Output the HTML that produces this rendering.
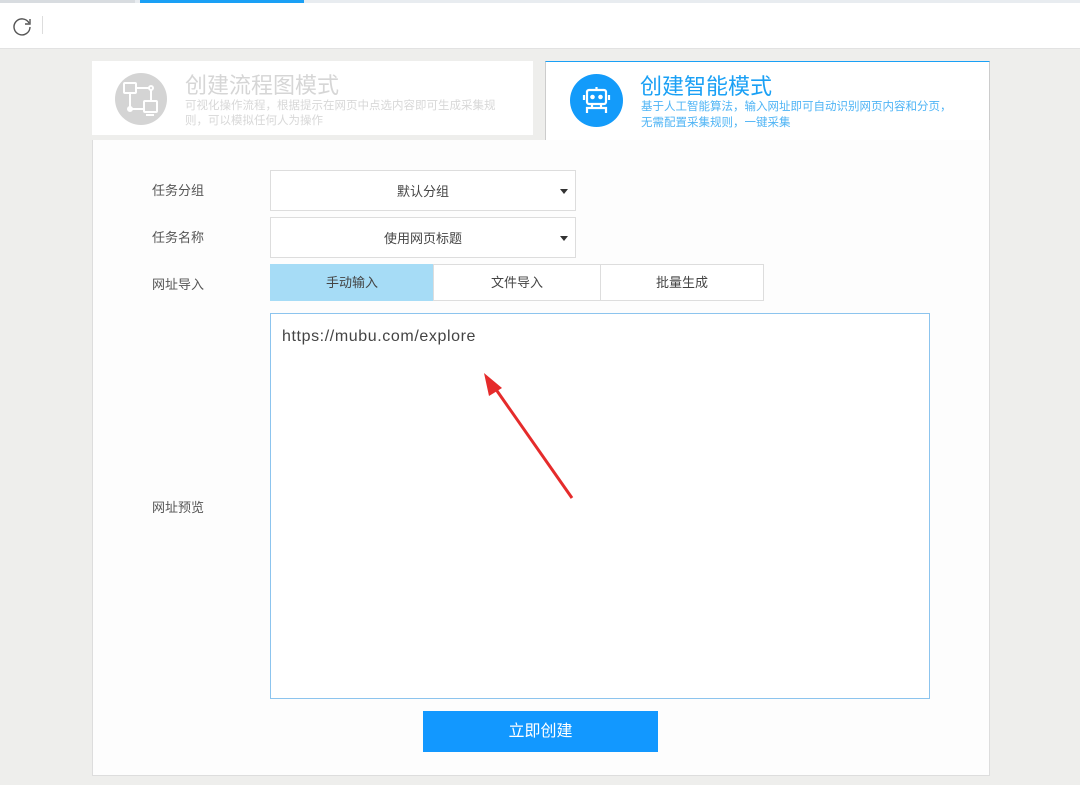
<!DOCTYPE html>
<html><head><meta charset="utf-8"><style>
*{margin:0;padding:0;box-sizing:border-box}
body{width:1080px;height:785px;background:#eeeeec;position:relative;overflow:hidden;font-family:"Liberation Sans","Noto Sans CJK SC",sans-serif}
.a{position:absolute}
.lab{position:absolute;left:152px;font-size:13px;color:#555}
.sel{position:absolute;left:270px;width:306px;height:41px;border:1px solid #ddd;background:#fff;font-size:13px;color:#444;text-align:center;line-height:41px}
.sel:after{content:"";position:absolute;right:7px;top:18px;border:4px solid transparent;border-top:5px solid #333}
.tb{position:absolute;top:264px;height:37px;border:1px solid #ddd;font-size:13px;color:#444;text-align:center;line-height:36px}
</style></head><body>
<div class="a" style="left:0;top:0;width:1080px;height:49px;background:#fff;border-bottom:1px solid #e2e2e2"></div>
<div class="a" style="left:0;top:0;width:1080px;height:3px;background:#e8ecf0"></div>
<div class="a" style="left:0;top:0;width:135px;height:3px;background:#d8dce0"></div>
<div class="a" style="left:140px;top:0;width:164px;height:3px;background:#1aa0f5"></div>
<svg class="a" style="left:11px;top:15px" width="22" height="22" viewBox="0 0 22 22"><path d="M18 8A8 8 0 1 0 19 12" fill="none" stroke="#555" stroke-width="1.4"/><path d="M19 4v5h-5" fill="none" stroke="#555" stroke-width="1.4"/></svg>
<div class="a" style="left:42px;top:16px;width:1px;height:18px;background:#ddd"></div>

<div class="a" style="left:92px;top:61px;width:441px;height:74px;background:#fff"></div>
<div class="a" style="left:115px;top:73px;width:52px;height:52px;border-radius:50%;background:#d4d4d4"></div>
<svg class="a" style="left:115px;top:73px" width="52" height="52" viewBox="0 0 52 52" fill="none" stroke="#fff" stroke-width="2"><rect x="9" y="10" width="12" height="10" rx="1"/><rect x="29" y="28" width="13" height="11" rx="1"/><path d="M21 15h13M15 20v16h14M36 17v11M31 42h8"/><circle cx="36" cy="15" r="2"/><circle cx="15" cy="36" r="2"/></svg>
<div class="a" style="left:185px;top:68px;font-size:22px;color:#d6d6d6">创建流程图模式</div>
<div class="a" style="left:185px;top:99px;font-size:11.5px;color:#d8d8d8;line-height:15px;width:312px">可视化操作流程，根据提示在网页中点选内容即可生成采集规则，可以模拟任何人为操作</div>

<div class="a" style="left:545px;top:61px;width:445px;height:80px;background:#fff;border-top:1px solid #1aa0f5;border-left:1px solid #ccc;border-right:1px solid #ccc"></div>
<div class="a" style="left:570px;top:74px;width:53px;height:53px;border-radius:50%;background:#139bfa"></div>
<svg class="a" style="left:570px;top:74px" width="53" height="53" viewBox="0 0 53 53" fill="none" stroke="#fff" stroke-width="2.2"><rect x="17" y="16" width="19" height="14" rx="2"/><path d="M26.5 13v3M14 21v5M39 21v5M22 30v4h9v-4M17 39v-5h19v5"/><circle cx="22.5" cy="23" r="1.2" fill="#fff"/><circle cx="30.5" cy="23" r="1.2" fill="#fff"/></svg>
<div class="a" style="left:640px;top:69px;font-size:22px;color:#1aa0f5">创建智能模式</div>
<div class="a" style="left:641px;top:99px;font-size:11.5px;color:#4fb4f5;line-height:16px;width:318px">基于人工智能算法，输入网址即可自动识别网页内容和分页，无需配置采集规则，一键采集</div>

<div class="a" style="left:92px;top:140px;width:898px;height:636px;background:#fdfdfd;border:1px solid #ddd;border-top:none"></div>
<div class="a" style="left:545px;top:140px;width:444px;height:2px;background:#fdfdfd"></div>

<div class="lab" style="top:180px">任务分组</div>
<div class="lab" style="top:227px">任务名称</div>
<div class="lab" style="top:274px">网址导入</div>
<div class="lab" style="top:497px">网址预览</div>
<div class="sel" style="top:170px">默认分组</div>
<div class="sel" style="top:217px">使用网页标题</div>
<div class="tb" style="left:270px;width:164px;background:#a6dcf6;border-color:#a6dcf6">手动输入</div>
<div class="tb" style="left:433px;width:168px;background:#fff">文件导入</div>
<div class="tb" style="left:600px;width:164px;background:#fff">批量生成</div>
<div class="a" style="left:270px;top:313px;width:660px;height:386px;background:#fff;border:1px solid #8cc4ee;padding:14px 11px;font-size:16px;color:#444;letter-spacing:0.6px">https://mubu.com/explore</div>
<svg class="a" style="left:0;top:0" width="1080" height="785"><line x1="572" y1="498" x2="495" y2="388" stroke="#e52b2b" stroke-width="3"/><polygon points="484,373 502,388 489,396" fill="#e52b2b"/></svg>
<div class="a" style="left:423px;top:711px;width:235px;height:41px;background:#1298ff;color:#fff;font-size:16px;text-align:center;line-height:41px">立即创建</div>
</body></html>
